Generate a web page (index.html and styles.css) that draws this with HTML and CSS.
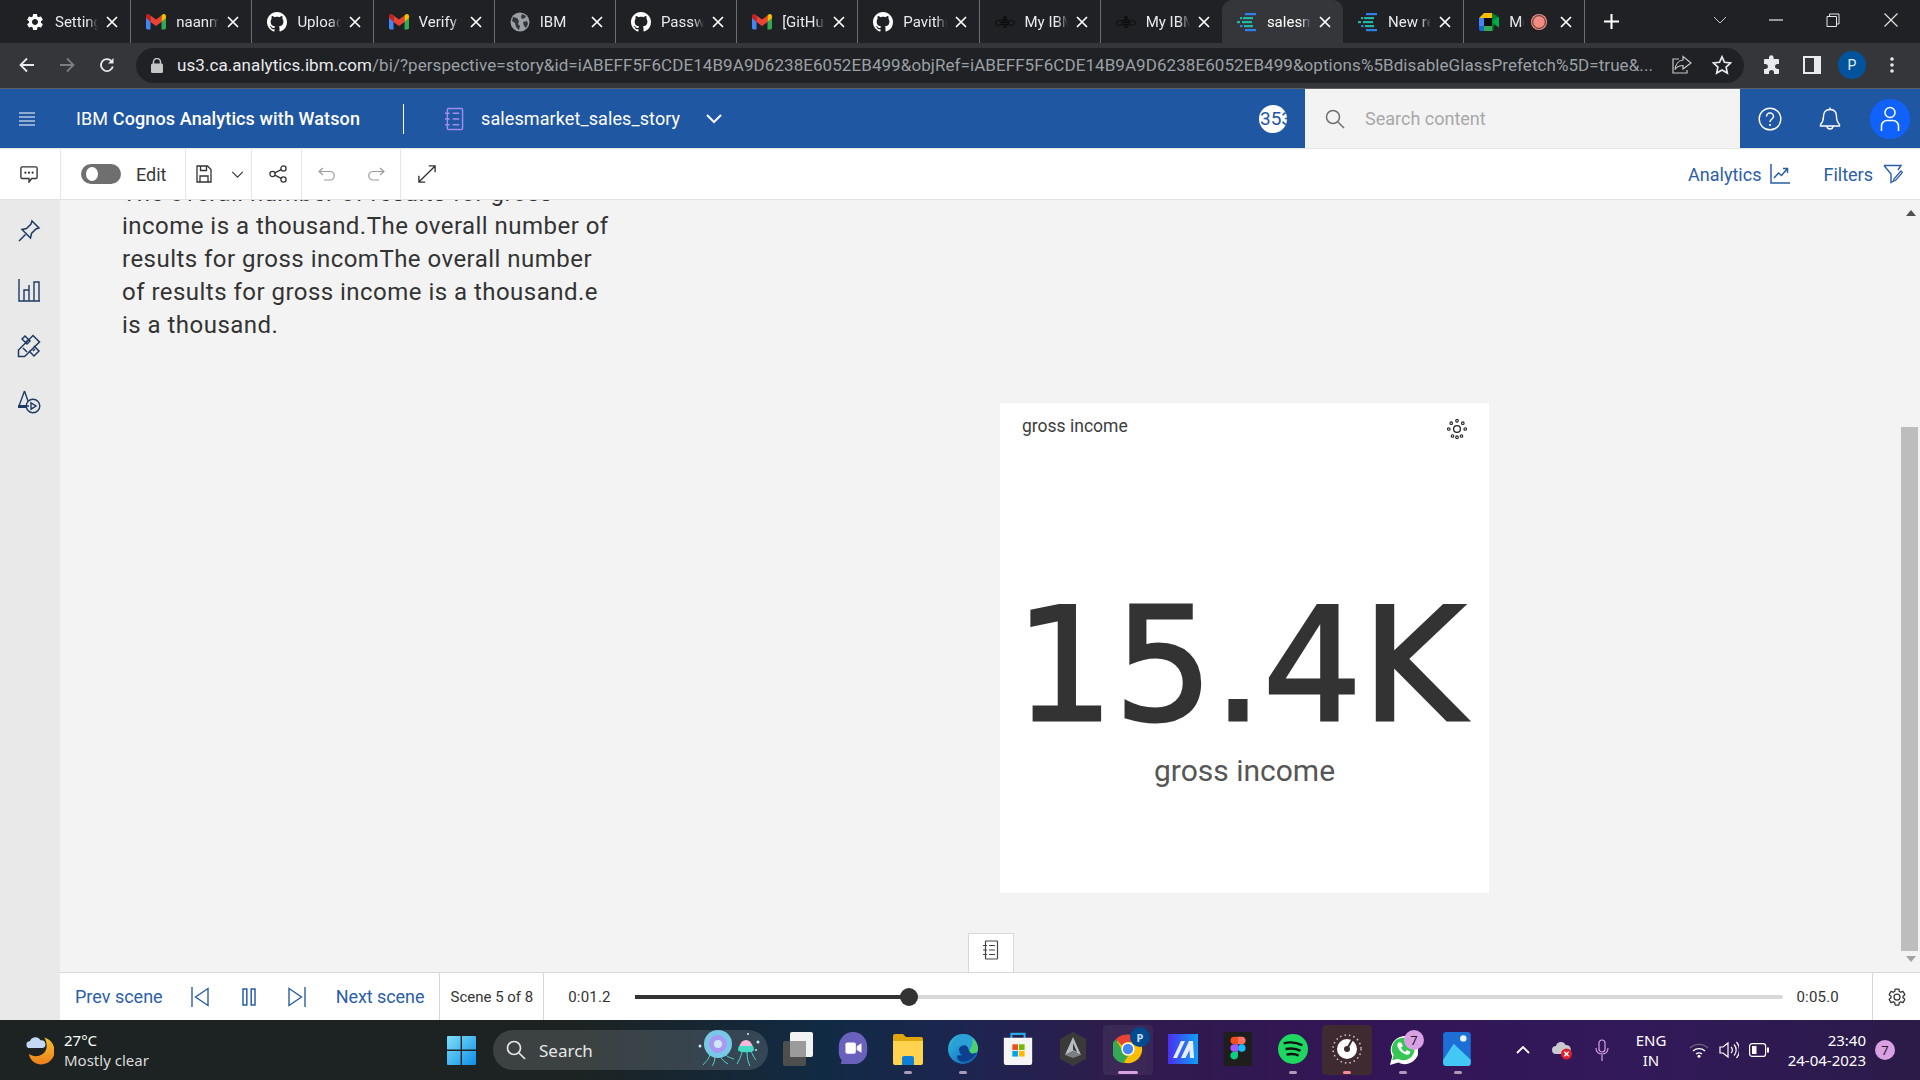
FILE: index.html
```html
<!DOCTYPE html>
<html lang="en">
<head>
<meta charset="utf-8">
<title>salesmarket_sales_story</title>
<link rel="stylesheet" href="styles.css">
</head>
<body>
<svg class="defs" width="0" height="0" aria-hidden="true">
  <defs>
    <symbol id="x" viewBox="0 0 12 12"><path d="M1 1l10 10M11 1L1 11" stroke="#fff" stroke-width="1.7" fill="none"/></symbol>
    <symbol id="gmail" viewBox="0 0 20 16"><path d="M0 3v11a1.4 1.4 0 0 0 1.4 1.4H4.5V7.2L0 3z" fill="#4285f4"/><path d="M20 3v11a1.4 1.4 0 0 1-1.4 1.4h-3.1V7.2L20 3z" fill="#34a853"/><path d="M4.5 7.8L0 4V2.2C0 .4 2.1-.6 3.4.5L4.5 1.4V7.8z" fill="#c5221f"/><path d="M4.5 8V1.4L10 5.6l5.5-4.2V8L10 12.1 4.5 8z" fill="#ea4335"/><path d="M15.5 7.8L20 4V2.2C20 .4 17.900-.6 16.600.5L15.500 1.400z" fill="#fbbc04"/></symbol>
    <symbol id="gh" viewBox="0 0 16 16"><path fill="#fff" d="M8 0C3.58 0 0 3.58 0 8c0 3.54 2.29 6.53 5.47 7.59.4.07.55-.17.55-.38 0-.19-.01-.82-.01-1.49-2.01.37-2.53-.49-2.69-.94-.09-.23-.48-.94-.82-1.13-.28-.15-.68-.52-.01-.53.63-.01 1.08.58 1.23.82.72 1.21 1.87.87 2.33.66.07-.52.28-.87.51-1.07-1.78-.2-3.64-.89-3.64-3.95 0-.87.31-1.59.82-2.15-.08-.2-.36-1.02.08-2.12 0 0 .67-.21 2.2.82.64-.18 1.32-.27 2-.27.68 0 1.36.09 2 .27 1.53-1.04 2.2-.82 2.2-.82.44 1.1.16 1.92.08 2.12.51.56.82 1.27.82 2.15 0 3.07-1.87 3.75-3.65 3.95.29.25.54.73.54 1.48 0 1.07-.01 1.93-.01 2.2 0 .21.15.46.55.38A8.013 8.013 0 0 0 16 8c0-4.42-3.58-8-8-8z"/></symbol>
    <symbol id="bee" viewBox="0 0 22 14"><g fill="none" stroke="#0b0b0b" stroke-width="1.1"><ellipse cx="4" cy="8" rx="3.400" ry="2.800"/><ellipse cx="18" cy="8" rx="3.400" ry="2.800"/></g><g fill="#0b0b0b"><circle cx="11" cy="2" r="1.700"/><rect x="7.500" y="4" width="7" height="1.600"/><rect x="7" y="6.500" width="8" height="1.600"/><rect x="7.500" y="9" width="7" height="1.600"/><rect x="9" y="11.500" width="4" height="1.600"/></g></symbol>
    <symbol id="cognos" viewBox="0 0 20 20"><g fill="#2f80ed"><rect x="8" y="1" width="11" height="2.200"/><rect x="8" y="17" width="11" height="2.200"/><rect x="3" y="13" width="2.500" height="2.200"/></g><g fill="#1fb8a6"><rect x="6" y="5" width="10" height="2.200"/><rect x="5" y="9" width="10" height="2.200"/><rect x="7" y="13" width="9" height="2.200"/><rect x="0" y="9" width="3" height="2.200"/><rect x="3" y="5" width="2" height="2.200"/></g></symbol>
  </defs>
</svg>

<div class="screen">
  <div class="tabstrip">
    <div class="tab"><svg class="favicon" viewBox="0 0 24 24"><path fill="#fff" d="M19.140 12.940c.04-.3.06-.61.06-.94 0-.32-.02-.64-.07-.94l2.030-1.580c.18-.14.23-.41.12-.61l-1.920-3.320c-.12-.22-.37-.29-.59-.22l-2.390.96c-.5-.38-1.030-.7-1.620-.94l-.36-2.540c-.04-.24-.24-.41-.48-.41h-3.840c-.24 0-.43.17-.47.41l-.36 2.540c-.59.24-1.130.57-1.620.94l-2.390-.96c-.22-.08-.47 0-.59.22L2.740 8.870c-.12.21-.08.47.12.61l2.030 1.580c-.05.3-.09.63-.09.94s.02.64.07.94l-2.030 1.580c-.18.14-.23.41-.12.61l1.920 3.320c.12.22.37.29.59.22l2.390-.96c.5.38 1.030.7 1.620.94l.36 2.540c.05.24.24.41.48.41h3.840c.24 0 .44-.17.47-.41l.36-2.540c.59-.24 1.130-.56 1.620-.94l2.390.96c.22.08.47 0 .59-.22l1.920-3.320c.12-.22.07-.47-.12-.61l-2.010-1.580zM12 15.600c-1.980 0-3.600-1.620-3.600-3.600s1.620-3.600 3.600-3.600 3.600 1.620 3.600 3.600-1.620 3.600-3.600 3.600z"/></svg><span class="tab-title">Settings</span><svg class="tab-x"><use href="#x"/></svg></div>
    <div class="tab"><svg class="favicon"><use href="#gmail"/></svg><span class="tab-title">naanmudhalvan</span><svg class="tab-x"><use href="#x"/></svg></div>
    <div class="tab"><svg class="favicon"><use href="#gh"/></svg><span class="tab-title">Upload</span><svg class="tab-x"><use href="#x"/></svg></div>
    <div class="tab"><svg class="favicon"><use href="#gmail"/></svg><span class="tab-title">Verify your</span><svg class="tab-x"><use href="#x"/></svg></div>
    <div class="tab"><svg class="favicon" viewBox="0 0 20 20"><circle cx="10" cy="10" r="9.500" fill="#9aa0a6"/><path d="M3 5l4 1 2 3-1 3 2 2-1 4-3-3-1-4-3-2zM12 2l4 2-1 2-3 1-1-2zM13 10l4-1 1 3-2 4-2-2z" fill="#35363a"/></svg><span class="tab-title">IBM</span><svg class="tab-x"><use href="#x"/></svg></div>
    <div class="tab"><svg class="favicon"><use href="#gh"/></svg><span class="tab-title">Password</span><svg class="tab-x"><use href="#x"/></svg></div>
    <div class="tab"><svg class="favicon"><use href="#gmail"/></svg><span class="tab-title">[GitHub]</span><svg class="tab-x"><use href="#x"/></svg></div>
    <div class="tab"><svg class="favicon"><use href="#gh"/></svg><span class="tab-title">Pavithra</span><svg class="tab-x"><use href="#x"/></svg></div>
    <div class="tab"><svg class="favicon"><use href="#bee"/></svg><span class="tab-title">My IBM</span><svg class="tab-x"><use href="#x"/></svg></div>
    <div class="tab no-sep"><svg class="favicon"><use href="#bee"/></svg><span class="tab-title">My IBM</span><svg class="tab-x"><use href="#x"/></svg></div>
    <div class="tab active"><svg class="favicon"><use href="#cognos"/></svg><span class="tab-title">salesmarket</span><svg class="tab-x"><use href="#x"/></svg></div>
    <div class="tab"><svg class="favicon"><use href="#cognos"/></svg><span class="tab-title">New report</span><svg class="tab-x"><use href="#x"/></svg></div>
    <div class="tab meet"><svg class="favicon" viewBox="0 0 20 18"><path d="M5 0h8v5H5v4H0V5z" fill="#fbbc04"/><path d="M0 5h5v8H0z" fill="#4285f4"/><path d="M0 13h5v5H2a2 2 0 0 1-2-2z" fill="#1967d2"/><path d="M5 13h8v5H5z" fill="#34a853"/><path d="M13 0v5h-1v8h1v5a1.500 1.500 0 0 0 1.500-1.500V13l4-3.500V3z" fill="#00832d"/><path d="M5 5h8v8H5z" fill="#0c0c0c"/><path d="M13 9l6-5c.5-.4 1-.1 1 .4v9.200c0 .5-.5.8-1 .4z" fill="#00ac47"/></svg><span class="tab-title short">Meet</span><span class="rec"></span><svg class="tab-x"><use href="#x"/></svg></div>
    <svg class="tab-plus" viewBox="0 0 16 16"><path d="M8 0v16M0 8h16" stroke="#fff" stroke-width="2.200"/></svg>
    <div class="win-controls">
      <svg class="wc wc-chev" viewBox="0 0 14 8"><path d="M1 1l6 6 6-6" stroke="#c8c8c8" fill="none"/></svg>
      <svg class="wc wc-min" viewBox="0 0 14 2"><path d="M0 1h14" stroke="#e8e8e8" stroke-width="1.200"/></svg>
      <svg class="wc wc-max" viewBox="0 0 14 14"><path d="M1 3.500h9.500v10H1zM3.500 3.500V1h9.500v10h-2.500" stroke="#e8e8e8" fill="none"/></svg>
      <svg class="wc wc-close" viewBox="0 0 14 14"><path d="M.5.5l13 13M13.500.5l-13 13" stroke="#e8e8e8" stroke-width="1.100"/></svg>
    </div>
  </div>

  <div class="addressbar">
    <div class="nav-slot"><svg viewBox="0 0 16 16" class="ic16"><path d="M15 8H2M8 1.500L1.500 8 8 14.500" stroke="#e8eaed" stroke-width="1.800" fill="none"/></svg></div>
    <div class="nav-slot"><svg viewBox="0 0 16 16" class="ic16"><path d="M1 8h13M8 1.500L14.500 8 8 14.500" stroke="#7b7e82" stroke-width="1.800" fill="none"/></svg></div>
    <div class="nav-slot"><svg viewBox="0 0 16 16" class="ic16"><path d="M13.800 9.500A6 6 0 1 1 12.400 4" stroke="#e8eaed" stroke-width="1.800" fill="none"/><path d="M14.500 1v5.500H9z" fill="#e8eaed"/></svg></div>
    <div class="omnibox">
      <svg class="lock" viewBox="0 0 12 15"><path d="M2.500 6V4a3.500 3.500 0 0 1 7 0v2" stroke="#c4c7c5" stroke-width="1.500" fill="none"/><rect y="5.500" width="12" height="9.500" rx="1.500" fill="#c4c7c5"/></svg>
      <div class="url"><span class="url-host">us3.ca.analytics.ibm.com</span>/bi/?perspective=story&amp;id=iABEFF5F6CDE14B9A9D6238E6052EB499&amp;objRef=iABEFF5F6CDE14B9A9D6238E6052EB499&amp;options%5BdisableGlassPrefetch%5D=true&amp;...</div>
      <div class="nav-slot"><svg viewBox="0 0 20 20" class="ic20"><path d="M11 5V1.500L19 8l-8 6v-3.500c-3.500 0-6 1-8 4 .5-5 3.500-9 8-9.500z" stroke="#c4c7c5" stroke-width="1.200" fill="none"/><path d="M7 4H1v14h14v-3" stroke="#c4c7c5" stroke-width="1.200" fill="none"/></svg></div>
      <div class="nav-slot"><svg viewBox="0 0 20 20" class="ic20"><path d="M10 1.800l2.500 5.500 6 .7-4.400 4.100 1.200 6L10 15.100l-5.300 3 1.200-6L1.500 8l6-.7z" stroke="#e8eaed" stroke-width="1.700" fill="none"/></svg></div>
    </div>
    <div class="nav-slot"><svg viewBox="0 0 20 20" class="ic20"><path fill="#e8eaed" d="M7 2.500a2.300 2.300 0 0 1 4.600 0V4H16a1 1 0 0 1 1 1v4h-1.500a2.500 2.500 0 0 0 0 5H17v4a1 1 0 0 1-1 1h-4v-1.500a2.500 2.500 0 0 0-5 0V19H3a1 1 0 0 1-1-1v-4h1.500a2.500 2.500 0 0 0 0-5H2V5a1 1 0 0 1 1-1h4z"/></svg></div>
    <div class="nav-slot"><svg viewBox="0 0 18 18" class="ic18"><path fill-rule="evenodd" fill="#e8eaed" d="M0 0h18v18H0zM2 2v14h9V2z"/></svg></div>
    <div class="nav-slot"><span class="profile">P</span></div>
    <div class="nav-slot"><svg viewBox="0 0 4 16" class="dots"><g fill="#e8eaed"><circle cx="2" cy="2" r="1.800"/><circle cx="2" cy="8" r="1.800"/><circle cx="2" cy="14" r="1.800"/></g></svg></div>
  </div>

  <header class="appbar">
    <div class="app-menu"><svg viewBox="0 0 16 14" class="ic16"><path d="M0 1h16M0 5h16M0 9h16M0 13h16" stroke="#fff" stroke-width="1"/></svg></div>
    <div class="app-title">IBM <b>Cognos Analytics with Watson</b></div>
    <div class="app-sep"></div>
    <svg class="app-note" viewBox="0 0 20 24"><g fill="none" stroke="#a08cf0" stroke-width="1.500"><rect x="2.500" y="1" width="16" height="22" rx="1"/><path d="M0 6h5M0 12h5M0 18h5M8 6h7M8 12h7M8 18h7"/></g></svg>
    <div class="app-doc">salesmarket_sales_story</div>
    <svg class="app-chev" viewBox="0 0 16 10"><path d="M1 1l7 7 7-7" stroke="#fff" stroke-width="2" fill="none"/></svg>
    <div class="app-badge"><span>353</span></div>
    <div class="app-search">
      <svg viewBox="0 0 20 20" class="ic20"><circle cx="8" cy="8" r="6.500" stroke="#6f6f6f" stroke-width="1.500" fill="none"/><path d="M13 13l6 6" stroke="#6f6f6f" stroke-width="1.500"/></svg>
      <span>Search content</span>
    </div>
    <div class="app-action"><svg viewBox="0 0 24 24" class="ic24"><circle cx="12" cy="12" r="10.800" stroke="#fff" stroke-width="1.400" fill="none"/><path d="M8.500 9.500A3.500 3.500 0 0 1 12 6a3.500 3.500 0 0 1 3.500 3.500c0 2.500-3.500 2.500-3.500 5.500" stroke="#fff" stroke-width="1.500" fill="none"/><circle cx="12" cy="18" r="1.100" fill="#fff"/></svg></div>
    <div class="app-action"><svg viewBox="0 0 24 24" class="ic24"><path d="M12 2.500c-4.500 0-6.500 3-6.500 7 0 4-1 6-3 8v1.500h19v-1.500c-2-2-3-4-3-8 0-4-2-7-6.500-7z" stroke="#fff" stroke-width="1.400" fill="none"/><path d="M12 .5v2M9 19a3 3 0 0 0 6 0" stroke="#fff" stroke-width="1.400" fill="none"/></svg></div>
    <div class="app-action"><span class="user-disc"><svg viewBox="0 0 20 26" class="user-ic"><circle cx="10" cy="6.500" r="5" stroke="#fff" stroke-width="1.500" fill="none"/><path d="M1.500 25v-5a5.500 5.500 0 0 1 5.500-5.500h6a5.500 5.500 0 0 1 5.500 5.500v5" stroke="#fff" stroke-width="1.500" fill="none"/></svg></span></div>
  </header>

  <div class="toolbar">
    <div class="tool-group g-comment"><svg viewBox="0 0 20 20" class="ic18"><path d="M2.500 2h15A1.500 1.500 0 0 1 19 3.500v10a1.500 1.500 0 0 1-1.500 1.500H13l-3 4v-4H2.500A1.500 1.500 0 0 1 1 13.500v-10A1.500 1.500 0 0 1 2.500 2z" stroke="#333" stroke-width="1.500" fill="none"/><g fill="#333"><circle cx="6" cy="8.500" r="1.200"/><circle cx="10" cy="8.500" r="1.200"/><circle cx="14" cy="8.500" r="1.200"/></g></svg></div>
    <div class="tool-group g-edit"><span class="toggle"><span class="knob"></span></span><span class="edit-label">Edit</span></div>
    <div class="tool-group g-save">
      <svg viewBox="0 0 16 18" class="ic18"><path d="M1 1h10.500L15 4.500V17H1z" stroke="#333" stroke-width="1.300" fill="none"/><path d="M4 17v-6h8v6M4.500 1v4.500h6V1" stroke="#333" stroke-width="1.300" fill="none"/></svg>
      <svg viewBox="0 0 14 8" class="small-chev"><path d="M1 1l6 6 6-6" stroke="#333" stroke-width="1.300" fill="none"/></svg>
    </div>
    <div class="tool-group g-share"><svg viewBox="0 0 18 18" class="ic18"><g stroke="#333" stroke-width="1.300" fill="none"><circle cx="3.500" cy="9" r="2.600"/><circle cx="14.500" cy="3.500" r="2.600"/><circle cx="14.500" cy="14.500" r="2.600"/><path d="M5.800 7.800l6.400-3.100M5.800 10.200l6.400 3.100"/></g></svg></div>
    <div class="tool-group g-undo">
      <svg viewBox="0 0 18 14" class="ic18"><path d="M5 1L1 4.500 5 8M1 4.500h11a4.200 4.200 0 0 1 0 8.500H6" stroke="#9b9b9b" stroke-width="1.200" fill="none"/></svg>
      <svg viewBox="0 0 18 14" class="ic18"><path d="M13 1l4 3.500L13 8M17 4.500H6a4.200 4.200 0 0 0 0 8.500h6" stroke="#9b9b9b" stroke-width="1.200" fill="none"/></svg>
    </div>
    <div class="tool-group g-expand"><svg viewBox="0 0 20 20" class="ic18"><path d="M1 19L19 1M12 1h7v7M8 19H1v-7" stroke="#333" stroke-width="1.500" fill="none"/></svg></div>
    <div class="tool-right">
      <span class="tool-link analytics">Analytics</span>
      <svg viewBox="0 0 20 20" class="ic20"><path d="M1 0v19h19" stroke="#2a5ea7" stroke-width="1.500" fill="none"/><path d="M4 14l4.500-5 3 2.500L17 5M13 4.500h4.500V9" stroke="#2a5ea7" stroke-width="1.500" fill="none"/></svg>
      <span class="tool-link filters">Filters</span>
      <svg viewBox="0 0 20 20" class="ic20"><path d="M1 1.500h17L15 6M1 1.500L8 10v8.500l2.500-1.500" stroke="#2a5ea7" stroke-width="1.400" fill="none"/><path d="M11 15l7-8 1.500 1.500-7 8L10.500 17z" stroke="#2a5ea7" stroke-width="1.200" fill="none"/></svg>
    </div>
  </div>

  <div class="workspace">
    <nav class="rail">
      <svg class="rail-ic first" viewBox="0 0 24 24"><path d="M15 2l7 7-3 1-4.500 4.500-1 4.500L5 10.500l4.500-1L14 5zM8.500 15.500L2 22" stroke="#1f3a63" stroke-width="1.500" fill="none"/></svg>
      <svg class="rail-ic" viewBox="0 0 24 24"><path d="M2 1v22h21M7 22.500V12h5v10.500M12 12V7h0M17 22.500V4h5v18.500" stroke="#1f3a63" stroke-width="1.400" fill="none"/></svg>
      <svg class="rail-ic" viewBox="0 0 24 24"><g stroke="#1f3a63" stroke-width="1.500" fill="none"><path d="M16 1.500l6.500 6.500-15 14.500H1.500V16z"/><path d="M8 2l5 5-3 3-5-5zM17 12l5 5-5 5-5-5M11 6l-2 2M18 15l-2 2M6 14l4 4"/></g></svg>
      <svg class="rail-ic" viewBox="0 0 24 24"><g stroke="#1f3a63" stroke-width="1.400" fill="none"><path d="M7.500 1L2 16h10M7.500 1l3.500 10"/><circle cx="16" cy="16" r="6.800"/><path d="M14 12.800l5 3.200-5 3.200z"/></g><rect x="1" y="15" width="9" height="3" fill="#1f3a63"/></svg>
    </nav>
    <div class="stage-col">
      <div class="stage">
        <main class="scene">
          <p class="story-text">The overall number of results for gross<br>income is a thousand.The overall number of<br>results for gross incomThe overall number<br>of results for gross income is a thousand.e<br>is a thousand.</p>
          <section class="kpi-card">
            <div class="kpi-head"><span>gross income</span>
              <svg viewBox="0 0 20 20" class="kpi-ic"><circle cx="10" cy="10" r="3.400" stroke="#222" stroke-width="1.300" fill="none"/><g fill="none" stroke="#222" stroke-width="1.100"><circle cx="10" cy="1.800" r="1.300"/><circle cx="10" cy="18.200" r="1.300"/><circle cx="1.800" cy="10" r="1.300"/><circle cx="18.200" cy="10" r="1.300"/><circle cx="4.200" cy="4.200" r="1.300"/><circle cx="15.800" cy="4.200" r="1.300"/><circle cx="5.500" cy="17" r="1.300"/><circle cx="14.500" cy="17" r="1.300"/></g></svg>
            </div>
            <div class="kpi-value">15.4K</div>
            <div class="kpi-label">gross income</div>
          </section>
        </main>
        <div class="scroller">
          <svg class="arrow" viewBox="0 0 10 6"><path d="M5 0l5 6H0z" fill="#505050"/></svg>
          <div class="scroll-track"><div class="scroll-thumb"></div></div>
          <svg class="arrow" viewBox="0 0 10 6"><path d="M0 0h10L5 6z" fill="#a3a3a3"/></svg>
        </div>
        <div class="notes-tab"><svg viewBox="0 0 16 20" class="notes-ic"><g fill="none" stroke="#444" stroke-width="1.200"><rect x="2.500" y="1" width="12" height="18" rx=".5"/><path d="M0 5.500h4M0 10h4M0 14.500h4M6 5.500h6M6 10h6M6 14.500h6"/></g></svg></div>
      </div>
      <div class="player">
        <span class="player-link prev">Prev scene</span>
        <svg class="pl-ic" viewBox="0 0 18 20"><path d="M1 0v20M17 1.500v17L4.500 10z" stroke="#2a5ea7" stroke-width="1.400" fill="none"/></svg>
        <svg class="pl-ic" viewBox="0 0 14 18"><g stroke="#2a5ea7" stroke-width="1.500" fill="none"><rect x="1" y="1" width="3.800" height="16"/><rect x="9.200" y="1" width="3.800" height="16"/></g></svg>
        <svg class="pl-ic" viewBox="0 0 18 20"><path d="M17 0v20M1 1.500v17L13.500 10z" stroke="#2a5ea7" stroke-width="1.400" fill="none"/></svg>
        <span class="player-link next">Next scene</span>
        <span class="scene-count">Scene 5 of 8</span>
        <span class="time elapsed">0:01.2</span>
        <div class="slider"><div class="slider-fill" style="width:23.9%"><span class="slider-thumb"></span></div></div>
        <span class="time total">0:05.0</span>
        <div class="player-gear"><svg viewBox="0 0 24 24" class="ic18"><path fill="none" stroke="#333" stroke-width="1.500" d="M19.140 12.940c.04-.3.06-.61.06-.94 0-.32-.02-.64-.07-.94l2.030-1.580c.18-.14.23-.41.12-.61l-1.920-3.320c-.12-.22-.37-.29-.59-.22l-2.390.96c-.5-.38-1.030-.7-1.620-.94l-.36-2.540c-.04-.24-.24-.41-.48-.41h-3.840c-.24 0-.43.17-.47.41l-.36 2.540c-.59.24-1.130.57-1.620.94l-2.390-.96c-.22-.08-.47 0-.59.22L2.740 8.870c-.12.21-.08.47.12.61l2.030 1.580c-.05.3-.09.63-.09.94s.02.64.07.94l-2.030 1.580c-.18.14-.23.41-.12.61l1.920 3.320c.12.22.37.29.59.22l2.390-.96c.5.38 1.030.7 1.620.94l.36 2.540c.05.24.24.41.48.41h3.840c.24 0 .44-.17.47-.41l.36-2.540c.59-.24 1.130-.56 1.620-.94l2.390.96c.22.08.47 0 .59-.22l1.920-3.320c.12-.22.07-.47-.12-.61l-2.010-1.580z"/><circle cx="12" cy="12" r="3.600" fill="none" stroke="#333" stroke-width="1.500"/></svg></div>
      </div>
    </div>
  </div>

  <footer class="taskbar">
    <div class="weather">
      <svg viewBox="0 0 30 32" class="weather-ic"><defs><linearGradient id="moon" x1="0" y1="0" x2="0" y2="1"><stop offset="0" stop-color="#f7c02a"/><stop offset="1" stop-color="#ec7f1c"/></linearGradient></defs><path d="M20 3a14.500 14.500 0 0 1 4 26C17 33 6 31 4 20c6 5 16 2 18-5 1-4 0-9-2-12z" fill="url(#moon)"/><path d="M5 14a3.500 3.500 0 0 1 0-7 6 6 0 0 1 11-1 4 4 0 0 1 2 8z" fill="#c3d8f5"/></svg>
      <div class="weather-text"><div class="w-temp">27°C</div><div class="w-desc">Mostly clear</div></div>
    </div>
    <svg viewBox="0 0 29 29" class="start-ic"><defs><linearGradient id="win" x1="0" y1="0" x2="1" y2="1"><stop offset="0" stop-color="#7fe0f8"/><stop offset="1" stop-color="#0d8ee8"/></linearGradient></defs><path d="M0 1a1 1 0 0 1 1-1h12.600v13.600H0zM15 0h13a1 1 0 0 1 1 1v12.600H15zM0 15h13.600v14H1a1 1 0 0 1-1-1zM15 15h14v13a1 1 0 0 1-1 1H15z" fill="url(#win)"/></svg>
    <div class="task-search">
      <svg viewBox="0 0 20 20" class="ic20"><circle cx="8" cy="8" r="6.500" stroke="#e6e6e6" stroke-width="1.700" fill="none"/><path d="M13 13l6 6" stroke="#e6e6e6" stroke-width="1.700"/></svg>
      <span class="ts-label">Search</span>
      <svg viewBox="0 0 62 40" class="jelly"><g fill="none" stroke="#49d8c5" stroke-width="1"><path d="M12 24c-1 6-5 8-7 11M17 26c0 4-1 8-3 10M22 26c2 4 5 6 8 8M27 24c2 3 6 4 9 5M44 22c-1 5-3 8-5 12M49 22c0 6 1 10 3 14M53 21c2 4 3 7 5 9"/></g><ellipse cx="20" cy="14" rx="14" ry="14" fill="#78c9e8"/><circle cx="20" cy="14" r="9" fill="#a79af0"/><circle cx="20" cy="14" r="4" fill="#cfe8fa"/><path d="M40 20a8 8 0 0 1 16 0c0 3-16 3-16 0z" fill="#46d9c5"/><path d="M42 16a6 6 0 0 1 12 0z" fill="#f6b8d8"/><g fill="#cfe8fa"><circle cx="2" cy="16" r="1.500"/><circle cx="60" cy="12" r="1.500"/><circle cx="50" cy="4" r="1"/><circle cx="58" cy="20" r="1"/></g></svg>
    </div>
    <div class="task-apps">
      <div class="app-slot"><svg viewBox="0 0 30 34"><rect y="9" width="23" height="25" rx="2" fill="#4e4e4e"/><rect x="7" width="23" height="25" rx="2" fill="#f2f2f2"/><rect x="7" y="9" width="16" height="16" fill="#9b9b9b"/></svg></div>
      <div class="app-slot"><svg viewBox="0 0 30 36"><path d="M15 0a15 15 0 0 1 15 15v5a14 14 0 0 1-14 14H2l1-4a15 15 0 0 1-3-10v-5A15 15 0 0 1 15 0z" fill="#6a61bd"/><rect x="7" y="11" width="11" height="12" rx="2" fill="#fff"/><path d="M19 15l5-3v10l-5-3z" fill="#fff"/></svg></div>
      <div class="app-slot dot"><svg viewBox="0 0 30 32"><path d="M0 3a2 2 0 0 1 2-2h8l3 3h15a2 2 0 0 1 2 2v4H0z" fill="#e0a40c"/><path d="M0 8h30v22a2 2 0 0 1-2 2H2a2 2 0 0 1-2-2z" fill="#ffd24f"/><path d="M9 25a2 2 0 0 1 2-2h8a2 2 0 0 1 2 2v7H9z" fill="#0f7fd6"/></svg></div>
      <div class="app-slot dot"><svg viewBox="0 0 32 36"><defs><linearGradient id="edge" x1="0" y1="0" x2="1" y2="1"><stop offset="0" stop-color="#34c2d8"/><stop offset=".5" stop-color="#1e8cd0"/><stop offset="1" stop-color="#0b4f9e"/></linearGradient></defs><circle cx="16" cy="18" r="16" fill="url(#edge)"/><path d="M16 2a16 16 0 0 1 16 16c0 4-4 6-8 5-3-1-1-7-6-9-6-2-12 2-14 8A16 16 0 0 1 16 2z" fill="#2a9fd8"/><path d="M26 6a16 16 0 0 1 6 12c0 3-3 5-6 5-2 0-3-1-4-3 2-1 5-6 4-14z" fill="#4fd06f"/><path d="M22 24c-5 3-9 0-10-4-1-3 2-6 6-6 5 1 3 8 8 9l4-1c-3 7-11 11-17 9-2-1-4-3-3-6z" fill="#0d3f8f"/></svg></div>
      <div class="app-slot"><svg viewBox="0 0 30 36"><path d="M8 7V2h14v5" stroke="#2aa7e8" stroke-width="2.200" fill="none"/><path d="M0 6h30v26a3 3 0 0 1-3 3H3a3 3 0 0 1-3-3z" fill="#f5f5f5"/><rect x="9" y="13" width="6" height="6" fill="#e8501f"/><rect x="16" y="13" width="6" height="6" fill="#76b900"/><rect x="9" y="20" width="6" height="6" fill="#00a4ef"/><rect x="16" y="20" width="6" height="6" fill="#ffb900"/></svg></div>
      <div class="app-slot"><svg viewBox="0 0 26 34"><path d="M13 0l13 7v20l-13 7L0 27V7z" fill="#3a3a3a"/><path d="M13 5l8 18-8-4-8 4z" fill="#b9bcc0"/><path d="M13 11l4 9-4-2z" fill="#3a3a3a"/><path d="M5 23l8-4 8 4-8 3z" fill="#7c7f82"/></svg></div>
      <div class="app-slot chrome-slot"><svg viewBox="0 0 30 36" class="chrome-ic"><circle cx="15" cy="18" r="15" fill="#fbbc04"/><path d="M15 3a15 15 0 0 1 13 7.500H15a7.500 7.500 0 0 0-6.500 3.800L2 7.600A15 15 0 0 1 15 3z" fill="#ea4335"/><path d="M2 7.600l6.500 10.900A7.500 7.500 0 0 0 15 25.500l-5 7.500A15 15 0 0 1 2 7.600z" fill="#34a853"/><circle cx="15" cy="18" r="7" fill="#fff"/><circle cx="15" cy="18" r="5.500" fill="#4285f4"/></svg><span class="chrome-p">P</span></div>
      <div class="app-slot"><svg viewBox="0 0 30 30"><defs><linearGradient id="mural" x1="0" y1="0" x2="1" y2="0"><stop offset="0" stop-color="#4a2ff0"/><stop offset="1" stop-color="#0ea0f5"/></linearGradient></defs><rect width="30" height="30" fill="url(#mural)"/><path d="M5 24L13 7h4L9 24zM13 24l8-17h4l1 17h-4l-.5-8-4 8z" fill="#e8ecff"/></svg></div>
      <div class="app-slot"><svg viewBox="0 0 30 36"><rect width="30" height="36" fill="#1e1e1e"/><path d="M11 5h4v8h-4a4 4 0 0 1 0-8z" fill="#f24e1e"/><path d="M15 5h4a4 4 0 0 1 0 8h-4z" fill="#ff7262"/><path d="M11 13h4v8h-4a4 4 0 0 1 0-8z" fill="#a259ff"/><circle cx="19" cy="17" r="4" fill="#1abcfe"/><path d="M11 21h4v4a4 4 0 1 1-4-4z" fill="#0acf83"/></svg></div>
      <div class="app-slot dot"><svg viewBox="0 0 32 36"><circle cx="16" cy="18" r="16" fill="#1ed760"/><path d="M6 12c7-2 14-1 20 2M8 18c6-1 11-1 16 2M9 24c5-1 9-1 13 1" stroke="#111" stroke-width="2.600" fill="none"/></svg></div>
      <div class="app-slot dot pink speed-slot"><svg viewBox="0 0 30 34"><circle cx="15" cy="17" r="10" fill="#fff"/><circle cx="15" cy="17" r="3" fill="#3e2a30"/><path d="M15 17l5-9" stroke="#3e2a30" stroke-width="2"/><circle cx="15" cy="17" r="14" fill="none" stroke="#d8c9c9" stroke-width="1.500" stroke-dasharray="1.500 3"/></svg></div>
      <div class="app-slot dot"><svg viewBox="0 0 32 36"><path d="M2 35l2.500-9A15 15 0 1 1 11 32.500z" fill="#fff"/><path d="M16 6a12 12 0 0 0-10 18.500L4.500 30l6-1.500A12 12 0 1 0 16 6z" fill="#35c653"/><path d="M11 11c-2 2-1 6 3 10 4 3 7 4 9 2l1-2-4-2-1 2c-2 0-5-3-5-5l2-1-2-4z" fill="#fff"/></svg><span class="wa-badge">7</span></div>
      <div class="app-slot dot"><svg viewBox="0 0 28 32"><rect width="26" height="32" rx="3" fill="#1d6fd6"/><path d="M0 26l10-15 16 15v3a3 3 0 0 1-3 3H3a3 3 0 0 1-3-3z" fill="#43c7f5"/><circle cx="19" cy="6" r="3" fill="#e8f5ff"/></svg></div>
    </div>
    <div class="tray">
      <svg viewBox="0 0 14 8" class="tray-chev"><path d="M1 7l6-6 6 6" stroke="#fff" stroke-width="1.800" fill="none"/></svg>
      <span class="tray-cloud"><svg viewBox="0 0 20 20"><path d="M4 14a4 4 0 0 1 0-8 5 5 0 0 1 9.500-1A4.500 4.500 0 0 1 15 14z" fill="#c9c9cf"/><circle cx="14.500" cy="14" r="5.500" fill="#e0202c"/><path d="M12.300 11.800l4.400 4.400M16.700 11.800l-4.400 4.400" stroke="#fff" stroke-width="1.400"/></svg></span>
      <svg viewBox="0 0 14 22" class="tray-mic"><rect x="4" y="1" width="6" height="12" rx="3" fill="none" stroke="#d9a0e3" stroke-width="1.200"/><path d="M1 9c0 8 12 8 12 0M7 16v6" fill="none" stroke="#d9a0e3" stroke-width="1.200"/></svg>
      <div class="tray-lang"><div>ENG</div><div>IN</div></div>
      <svg viewBox="0 0 20 16" class="tray-wifi"><path d="M1 6a13 13 0 0 1 18 0" stroke="#6e6a78" stroke-width="1.300" fill="none"/><path d="M4 9a9 9 0 0 1 12 0M7 12a5 5 0 0 1 6 0" stroke="#fff" stroke-width="1.300" fill="none"/><circle cx="10" cy="14.300" r="1.500" fill="#fff"/></svg>
      <svg viewBox="0 0 20 18" class="tray-vol"><path d="M1 6h3l5-4v14l-5-4H1z" stroke="#fff" stroke-width="1.200" fill="none"/><path d="M12 6a4 4 0 0 1 0 6M15 3.500a8 8 0 0 1 0 11M17.500 1a12 12 0 0 1 0 16" stroke="#fff" stroke-width="1.200" fill="none"/></svg>
      <svg viewBox="0 0 20 14" class="tray-bat"><rect x=".6" y=".6" width="16" height="12.800" rx="2.500" stroke="#fff" stroke-width="1.200" fill="none"/><rect x="3" y="3" width="4.500" height="8" fill="#fff"/><rect x="18" y="4.500" width="2" height="5" fill="#fff"/></svg>
      <div class="tray-clock"><div>23:40</div><div>24-04-2023</div></div>
      <span class="tray-badge">7</span>
    </div>
  </footer>
</div>
</body>
</html>
```

FILE: styles.css
```css
* { box-sizing: border-box; }
html, body { margin: 0; padding: 0; height: 100%; overflow: hidden; }
body { font-family: "Roboto", "Liberation Sans", sans-serif; color: #161616; background: #f3f3f3; }
svg { display: block; flex: none; }
.defs { position: absolute; }
.screen { width: 1920px; height: 1080px; display: flex; flex-direction: column; }
.ic16 { width: 16px; height: 16px; }
.ic18 { width: 18px; height: 18px; }
.ic20 { width: 20px; height: 20px; }
.ic24 { width: 24px; height: 24px; }

/* browser tabs */
.tabstrip { height: 43px; flex: none; background: #202124; display: flex; padding-left: 10px; }
.tab { width: 121.2px; height: 43px; flex: none; display: flex; align-items: center; padding: 0 12px 0 15px; color: #e8eaed; font-size: 15px; border-right: 1px solid #6a6c70; }
.tab.no-sep { border-right: 0; }
.tab.active { background: #35363a; border-right: 0; border-radius: 10px 10px 0 0; color: #fff; }
.favicon { width: 20px; height: 20px; }
.tab-title { flex: 1; min-width: 0; margin-left: 10px; white-space: nowrap; overflow: hidden; -webkit-mask-image: linear-gradient(90deg, #000 75%, transparent 100%); mask-image: linear-gradient(90deg, #000 75%, transparent 100%); }
.tab-x { width: 12px; height: 12px; margin-left: 8px; }
.tab-title.short { flex: none; width: 15px; }
.rec { width: 16px; height: 16px; border-radius: 50%; background: #f28b82; border: 1.500px solid #202124; box-shadow: 0 0 0 1.500px #f28b82; margin-left: 7px; transform: scale(.85); }
.meet .tab-x { margin-left: auto; }
.tab-plus { width: 15px; height: 15px; margin: 14px 0 0 19px; }
.win-controls { margin-left: auto; display: flex; align-items: center; height: 40px; }
.wc { display: block; }
.wc-chev { width: 14px; height: 8px; margin-right: 42px; }
.wc-min { width: 14px; height: 2px; margin-right: 43px; }
.wc-max { width: 14px; height: 14px; margin-right: 44px; }
.wc-close { width: 14px; height: 14px; margin-right: 22px; }

/* address bar */
.addressbar { height: 46px; flex: none; display: flex; align-items: center; padding: 0 8px 1px 7px; background: #35363a; border-bottom: 1px solid #5e5f63; }
.nav-slot { width: 40px; height: 35px; flex: none; display: flex; align-items: center; justify-content: center; }
.omnibox { flex: 1; min-width: 0; height: 35px; margin: 0 8px 0 9px; padding: 0 2px 0 15px; background: #202124; border-radius: 18px; display: flex; align-items: center; }
.lock { width: 12px; height: 15px; }
.url { flex: 1; min-width: 0; margin: 0 8px 0 14px; white-space: nowrap; overflow: hidden; color: #9aa0a6; font-size: 17px; letter-spacing: .07px; }
.url-host { color: #e8eaed; }
.profile { width: 28px; height: 28px; border-radius: 50%; background: #00539c; color: #e8f0fe; font-size: 14px; display: flex; align-items: center; justify-content: center; }
.dots { width: 4px; height: 16px; }

/* ibm header */
.appbar { height: 59px; flex: none; background: #1f57a3; display: flex; align-items: center; color: #fff; }
.app-menu { width: 54px; display: flex; justify-content: center; }
.app-title { width: 327px; margin-left: 22px; font-size: 18px; font-weight: 400; letter-spacing: .12px; white-space: nowrap; }
.app-title b { font-weight: 500; }
.app-sep { width: 1px; height: 30px; background: #fff; flex: none; }
.app-note { width: 19px; height: 24px; margin-left: 41px; }
.app-doc { margin-left: 17px; font-size: 18px; width: 214px; letter-spacing: .1px; white-space: nowrap; }
.app-chev { width: 16px; height: 10px; margin-left: 11px; }
.app-badge { width: 28px; height: 28px; margin-left: auto; border-radius: 50%; background: #fff; color: #1f57a3; font-size: 19px; overflow: hidden; display: flex; align-items: center; padding-left: 1px; white-space: nowrap; }
.app-search { width: 435px; height: 59px; margin-left: 18px; background: #f3f3f3; display: flex; align-items: center; padding-left: 20px; color: #a8a8a8; font-size: 18px; gap: 20px; }
.app-action { width: 60px; flex: none; display: flex; align-items: center; justify-content: center; }
.user-disc { width: 40px; height: 40px; border-radius: 50%; background: #0f62fe; display: flex; align-items: center; justify-content: center; }
.user-ic { width: 20px; height: 26px; }

/* toolbar */
.toolbar { height: 52px; flex: none; background: #fff; border-top: 1px solid #e6e6e6; border-bottom: 1px solid #e3e3e3; display: flex; color: #393939; }
.tool-group { display: flex; align-items: center; justify-content: center; border-right: 1px solid #e6e6e6; flex: none; }
.g-comment { width: 61px; padding-right: 2px; }
.g-edit { width: 125px; justify-content: flex-start; padding-left: 20px; }
.toggle { width: 40px; height: 20px; border-radius: 10px; background: #6f6f6f; display: flex; align-items: center; padding-left: 5px; }
.knob { width: 12px; height: 14px; border-radius: 50%; background: #fff; }
.edit-label { margin-left: 15px; font-size: 18px; }
.g-save { width: 66px; gap: 18px; justify-content: flex-start; padding-left: 9px; }
.small-chev { width: 13px; height: 7px; }
.g-share { width: 50px; padding-left: 2px; }
.g-undo { width: 99px; gap: 31px; }
.g-undo .ic18 { height: 14px; }
.g-expand { width: 52px; border-right: 0; }
.tool-right { margin-left: auto; display: flex; align-items: center; color: #2a5ea7; font-size: 18px; padding-right: 17px; }
.analytics { margin-right: 9px; }
.filters { margin: 0 10px 0 33px; }

/* workspace */
.workspace { height: 820px; flex: none; display: flex; }
.rail { width: 60px; flex: none; background: #e9e9e9; display: flex; flex-direction: column; align-items: center; padding: 19px 2px 0 0; gap: 32px; }
.rail-ic { width: 24px; height: 24px; }
.rail-ic.first { margin-bottom: 3px; }
.stage-col { flex: 1; min-width: 0; display: flex; flex-direction: column; }
.stage { height: 772px; flex: none; background: #f3f3f3; display: flex; position: relative; overflow: hidden; }
.scene { flex: 1; min-width: 0; padding-left: 62px; }
.story-text { margin: -23px 0 0; font-size: 24px; line-height: 33px; letter-spacing: .47px; color: #333; white-space: nowrap; }
.kpi-card { width: 489px; height: 490px; margin: 61px 0 0 878px; background: #fff; display: flex; flex-direction: column; align-items: center; }
.kpi-head { width: 100%; display: flex; justify-content: space-between; padding: 13px 22px 0; font-size: 17.5px; color: #3d3d3d; }
.kpi-ic { width: 20px; height: 20px; margin: 3px 0 0; }
.kpi-value { margin: 152px 10px 0 0; font-family: "DejaVu Sans", sans-serif; font-size: 156px; line-height: 150px; -webkit-text-stroke: 3px #333; color: #333; white-space: nowrap; }
.kpi-label { margin-top: 12px; font-size: 30px; color: #565656; }
.scroller { width: 19px; flex: none; display: flex; flex-direction: column; align-items: center; padding: 10px 0 10px; }
.arrow { width: 10px; height: 6px; }
.scroll-track { flex: 1; width: 100%; padding-top: 211px; padding-bottom: 5px; }
.scroll-thumb { width: 17px; height: 100%; background: #bdbdbd; }
.notes-tab { position: absolute; left: 908px; bottom: -1px; width: 46px; height: 40px; background: #fff; border: 1px solid #d8d8d8; display: flex; justify-content: center; padding-top: 6px; z-index: 2; }
.notes-ic { width: 16px; height: 20px; }

/* player */
.player { height: 48px; flex: none; background: #fff; border-top: 1px solid #d8d8d8; display: flex; align-items: center; color: #333; }
.player-link { color: #2a5ea7; font-size: 18px; white-space: nowrap; }
.prev { margin-left: 15px; }
.pl-ic { width: 18px; height: 20px; }
.player .pl-ic:nth-of-type(1) { margin-left: 28px; }
.player .pl-ic:nth-of-type(2) { width: 14px; height: 18px; margin-left: 33px; }
.player .pl-ic:nth-of-type(3) { margin-left: 32px; }
.next { margin-left: 30px; letter-spacing: -.06px; }
.scene-count { height: 100%; display: flex; align-items: center; margin-left: 15px; padding: 0 10px; border-left: 1px solid #d8d8d8; border-right: 1px solid #d8d8d8; font-size: 15px; white-space: nowrap; }
.time { font-size: 15px; letter-spacing: .2px; white-space: nowrap; }
.elapsed { margin-left: 24px; }
.slider { flex: 1; min-width: 0; height: 4px; margin: 0 13px 0 24px; background: #d8d8d8; border-radius: 2px; }
.slider-fill { height: 100%; background: #333; position: relative; }
.slider-thumb { position: absolute; right: -9px; top: -7px; width: 18px; height: 18px; border-radius: 50%; background: #333; }
.player-gear { width: 48px; height: 100%; margin-left: 33px; border-left: 1px solid #d8d8d8; display: flex; align-items: center; justify-content: center; }
.player-gear .ic18 { width: 20px; height: 20px; }

/* taskbar */
.taskbar { height: 60px; flex: none; display: flex; align-items: center; color: #fff; font-family: "Noto Sans", sans-serif; background: linear-gradient(90deg, #1c2322 0, #1c2322 30%, #112a44 43%, #1c2550 50%, #2f1c4c 58%, #331556 70%, #32195a 85%, #2a1b48 100%); }
.weather { width: 447px; flex: none; display: flex; align-items: center; padding-left: 25px; }
.weather-ic { width: 29px; height: 32px; }
.weather-text { margin-left: 10px; font-size: 15px; line-height: 20px; }
.w-desc { color: #dcdcdc; }
.start-ic { width: 29px; height: 29px; }
.task-search { width: 275px; height: 40px; margin-left: 17px; border-radius: 20px; background: rgba(255,255,255,.14); display: flex; align-items: center; padding-left: 13px; font-size: 17px; color: #e6e6e6; }
.ts-label { margin-left: 13px; }
.jelly { width: 62px; height: 40px; margin-left: auto; margin-right: 8px; }
.task-apps { display: flex; margin-left: 2px; }
.app-slot { width: 55px; height: 50px; display: flex; align-items: center; justify-content: center; position: relative; padding-bottom: 3px; }
.app-slot svg { width: 30px; height: 34px; }
.dot::after { content: ""; position: absolute; left: 24px; bottom: 1px; width: 8px; height: 3px; border-radius: 2px; background: #a99cb5; }
.chrome-slot { background: rgba(255,255,255,.06); border-radius: 4px; width: 44px; margin: 0 8px 0 3px; padding-left: 6px; box-shadow: 6px 0 0 rgba(255,255,255,.05); }
.chrome-slot::after { content: ""; position: absolute; left: 15px; bottom: 1px; width: 20px; height: 3px; border-radius: 2px; background: #d9a0e3; }
.chrome-p { position: absolute; top: 2px; right: -3px; width: 20px; height: 20px; border-radius: 50%; background: #004a8f; color: #cfe0ff; font-size: 11px; font-weight: 700; display: flex; align-items: center; justify-content: center; }
.speed-slot { background: #3e2a30; border-radius: 4px; width: 50px; margin: 0 3px 0 2px; }
.pink::after { background: #f28b9a; left: 21px; }
.wa-badge { position: absolute; top: 5px; right: 6px; width: 20px; height: 20px; border-radius: 50%; background: #d9a0e3; color: #222; font-size: 13px; display: flex; align-items: center; justify-content: center; }
.tray { flex: 1; display: flex; align-items: center; font-size: 15px; min-width: 0; padding-left: 31px; }
.tray-chev { width: 14px; height: 8px; }
.tray-cloud svg { width: 20px; height: 20px; }
.tray-cloud { margin-left: 22px; }
.tray-mic { width: 14px; height: 22px; margin-left: 23px; }
.tray-lang { width: 50px; margin-left: 17px; text-align: center; line-height: 20px; }
.tray-wifi { width: 20px; height: 16px; margin-left: 13px; }
.tray-vol { width: 20px; height: 18px; margin-left: 10px; }
.tray-bat { width: 20px; height: 14px; margin-left: 10px; }
.tray-clock { width: 95px; margin-left: 2px; text-align: right; line-height: 20px; white-space: nowrap; }
.tray-badge { width: 20px; height: 20px; margin-left: 9px; border-radius: 50%; background: #d9a0e3; color: #222; font-size: 13px; display: flex; align-items: center; justify-content: center; }
```
